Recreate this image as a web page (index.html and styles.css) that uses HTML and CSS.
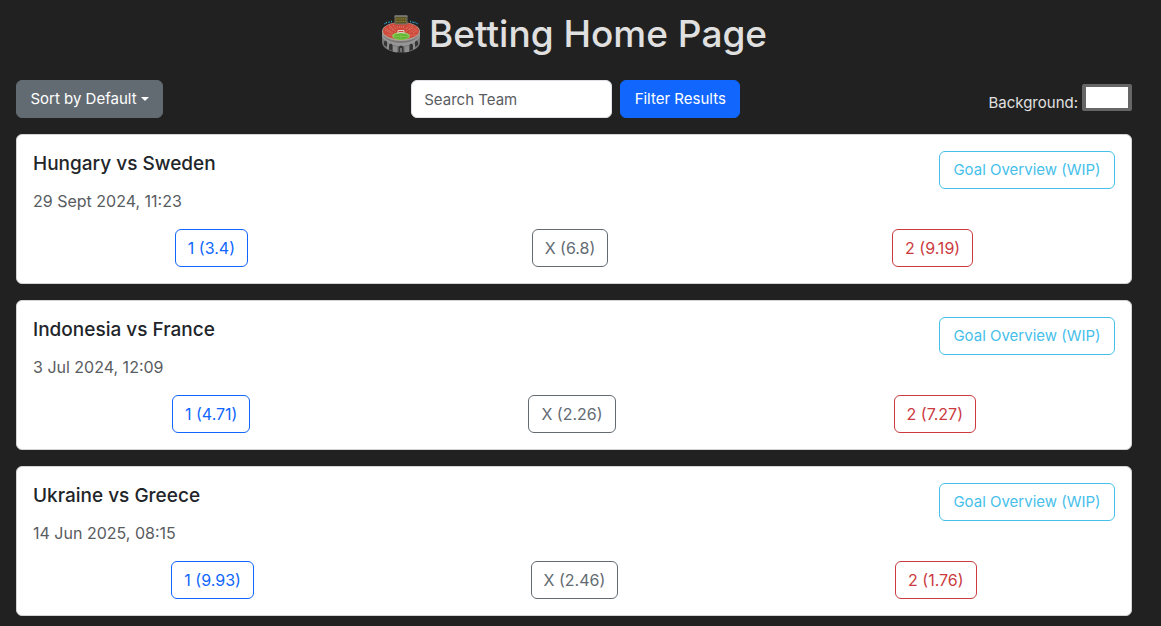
FILE: index.html
```html
<!DOCTYPE html>
<html lang="en">
<head>
<meta charset="utf-8">
<meta name="viewport" content="width=device-width, initial-scale=1">
<title>Betting Home Page</title>
<link rel="stylesheet" href="styles.css">
</head>
<body>
<header class="page-header">
  <h1 class="page-title">
    <svg class="stadium" viewBox="0 0 40 40" aria-hidden="true">
      <path d="M3 10l2-1M7 8.500l2-.5M31 8l2 .5M35 9l2 1" stroke="#2a6f9e" stroke-width="1.300"/>
      <path d="M5 8.500h1M10 7.500h1M29 7.500h1M33.500 8.500h1" stroke="#36a59a" stroke-width="1.300"/>
      <path d="M1 17v11c0 6 8 10.500 19 10.500S39 34 39 28V17z" fill="#777"/>
      <path d="M1 19c2 6 9 10 19 10s17-4 19-10v3c-2 6-9 10-19 10S3 28 1 22z" fill="#969696"/>
      <g fill="#353535">
        <path d="M3 28q1.500-3 3 0v5l-3-2zM8 31q2-3 3.500 0v6L8 35.500zM17.500 33q2.500-3 5 0v5.500h-5zM28.500 31q1.500-3 3.500 0v4.500L28.500 37zM34 28q1.500-3 3 0v3l-3 2z"/>
      </g>
      <path d="M13 32v6M15 32.500v6M25 32.500v6M27 32v6M7 30v5M33 30v5" stroke="#a5a5a5"/>
      <path d="M20 34v4" stroke="#888" stroke-width="1.500"/>
      <ellipse cx="20" cy="17.500" rx="19" ry="9.500" fill="#a9a097"/>
      <ellipse cx="20" cy="17" rx="18" ry="8.500" fill="#cf4a3b"/>
      <path d="M4 14l8 5M8 11l7 7M32 11l-7 7M36 14l-8 5M5 21h7M35 21h-7" stroke="#dc8577" stroke-width=".5"/>
      <path d="M4 16l6 3M8 13l5 4M12 11l3 4M32 19l5-3M28 16l5-3M25 15l4-4M16 13h8" stroke="#e0968a" stroke-width=".8" stroke-dasharray="1 1"/>
      <ellipse cx="20" cy="22" rx="9" ry="4" fill="#90c85a"/>
      <ellipse cx="20" cy="22.500" rx="7.500" ry="3" fill="#64b634"/>
      <path d="M20 20v5M13 22.500h14" stroke="#8dcc63" stroke-width=".5"/>
      <path d="M17 20v-3.500h6V20M18 18.500h4" fill="none" stroke="#e5cec6"/>
      <path d="M14 2h12v8H14z" fill="#5b5528" stroke="#77746a"/>
      <path d="M15 5h10M15 7.500h10" stroke="#8d7d2c" stroke-dasharray="1.500 .7"/>
      <path d="M13.500 2h13" stroke="#8b8b8b"/>
    </svg>
    <span>Betting Home Page</span>
  </h1>
</header>
<main class="content">
  <div class="toolbar">
    <button type="button" class="btn btn-sort" aria-haspopup="true">Sort by Default<span class="caret"></span></button>
    <form class="search">
      <input class="search-input" type="search" placeholder="Search Team" aria-label="Search Team">
      <button type="button" class="btn btn-filter">Filter Results</button>
    </form>
    <div class="background-picker">
      <label for="background">Background:</label>
      <input id="background" class="swatch" type="color" value="#ffffff">
    </div>
  </div>
  <article class="card">
    <div class="card-head">
      <h2 class="match">Hungary vs Sweden</h2>
      <button type="button" class="btn btn-info">Goal Overview (WIP)</button>
    </div>
    <p class="date">29 Sept 2024, 11:23</p>
    <div class="odds">
      <button type="button" class="btn btn-home">1 (3.4)</button>
      <button type="button" class="btn btn-draw">X (6.8)</button>
      <button type="button" class="btn btn-away">2 (9.19)</button>
    </div>
  </article>
  <article class="card">
    <div class="card-head">
      <h2 class="match">Indonesia vs France</h2>
      <button type="button" class="btn btn-info">Goal Overview (WIP)</button>
    </div>
    <p class="date">3 Jul 2024, 12:09</p>
    <div class="odds">
      <button type="button" class="btn btn-home">1 (4.71)</button>
      <button type="button" class="btn btn-draw">X (2.26)</button>
      <button type="button" class="btn btn-away">2 (7.27)</button>
    </div>
  </article>
  <article class="card">
    <div class="card-head">
      <h2 class="match">Ukraine vs Greece</h2>
      <button type="button" class="btn btn-info">Goal Overview (WIP)</button>
    </div>
    <p class="date">14 Jun 2025, 08:15</p>
    <div class="odds">
      <button type="button" class="btn btn-home">1 (9.93)</button>
      <button type="button" class="btn btn-draw">X (2.46)</button>
      <button type="button" class="btn btn-away">2 (1.76)</button>
    </div>
  </article>
</main>
</body>
</html>
```

FILE: styles.css
```css
* { box-sizing: border-box; }

body {
  margin: 0;
  padding: 10px 29px 0 16px;
  background: #212121;
  color: #e0e0e0;
  font: 400 16px/24px Inter, "Liberation Sans", sans-serif;
}

.page-header { margin-bottom: 22px; }

.page-title {
  display: flex;
  justify-content: center;
  align-items: center;
  gap: 8px;
  margin: 0;
  font-size: 37px;
  font-weight: 500;
  line-height: 48px;
}

.stadium { width: 40px; height: 40px; fill: none; }

.content {
  display: flex;
  flex-direction: column;
  gap: 16px;
}

.toolbar {
  display: flex;
  justify-content: space-between;
  align-items: center;
  font-size: 15px;
}

.btn {
  padding: 6px 12px;
  border: 1px solid currentColor;
  border-radius: 6px;
  background: transparent;
  font: inherit;
  white-space: nowrap;
  cursor: pointer;
}

.btn-sort {
  display: flex;
  justify-content: center;
  align-items: center;
  gap: 4px;
  min-width: 147px;
  border-color: #636b72;
  background: #636b72;
  color: #fff;
}

.caret {
  border: 4px solid transparent;
  border-top-color: currentColor;
  border-bottom: 0;
}

.search { display: flex; gap: 8px; }

.search-input {
  width: 201px;
  height: 38px;
  padding: 6px 12px;
  border: 1px solid #dee2e6;
  border-radius: 6px;
  background: #fff;
  color: #212529;
  font: inherit;
  appearance: none;
}

.search-input::placeholder { color: #595c5f; opacity: 1; }

.btn-filter {
  min-width: 120px;
  border-color: #1066fd;
  background: #1066fd;
  color: #fff;
}

.background-picker {
  display: flex;
  align-items: flex-end;
  gap: 4px;
  height: 31px;
}

.swatch {
  align-self: flex-start;
  width: 50px;
  height: 27px;
  padding: 0;
  border: solid #666;
  border-width: 3px 4px;
  border-radius: 2px;
  background: #fff;
  appearance: none;
}

.swatch::-webkit-color-swatch-wrapper { padding: 0; }
.swatch::-webkit-color-swatch { border: 0; border-radius: 0; }

.card {
  padding: 16px;
  border: 1px solid #d3d3d3;
  border-radius: 6px;
  background: #fff;
  color: #212529;
}

.card-head {
  display: flex;
  justify-content: space-between;
  align-items: flex-start;
}

.match {
  margin: 0;
  font-size: 19px;
  font-weight: 500;
  line-height: 26px;
}

.date { margin: 0 0 16px; color: #595c5f; }

.odds { display: flex; justify-content: space-around; }

.btn-info {
  min-width: 176px;
  color: #46c0ea;
  font-size: 15px;
}

.btn-home { color: #1066fd; }
.btn-draw { color: #636b72; }
.btn-away { color: #cb3a3f; }
```
